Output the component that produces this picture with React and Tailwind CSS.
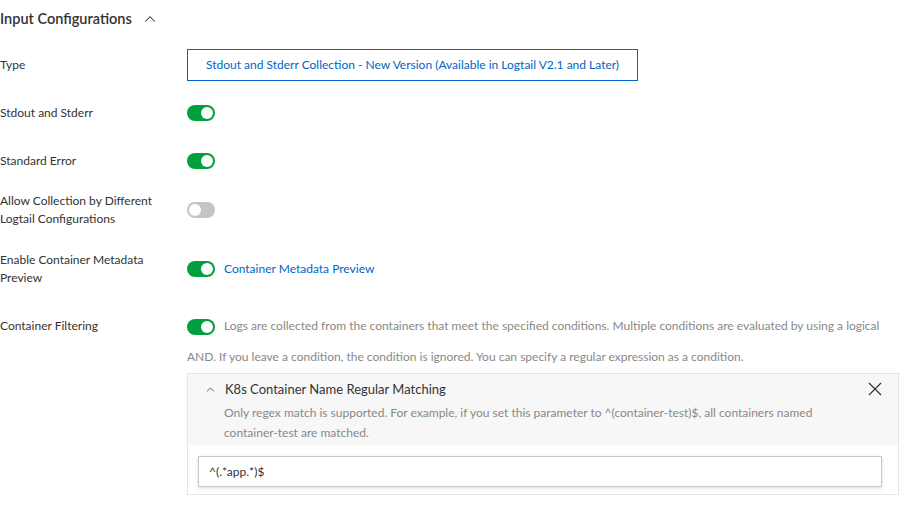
import { ChevronUp } from "lucide-react";

const font = { fontFamily: "Lato, 'Liberation Sans', sans-serif" };

function Toggle({ on = true }) {
  return (
    <span
      className={`inline-flex h-4 w-7 shrink-0 items-center rounded-full px-[2px] align-middle ${
        on ? "justify-end bg-[#00a03e]" : "justify-start bg-[#c4c4c4]"
      }`}
    >
      <span className="h-3 w-3 rounded-full bg-white" />
    </span>
  );
}

function Row({ label, children, className = "" }) {
  return (
    <div className={`flex items-center ${className}`}>
      <div className="w-[187px] shrink-0 pr-4 text-xs leading-[18px] text-[#333]">{label}</div>
      <div className="flex min-h-8 flex-1 items-center">{children}</div>
    </div>
  );
}

export default function App() {
  return (
    <div className="h-[514px] w-[907px] overflow-hidden bg-white text-[#333]" style={font}>
      {/* ── header ── */}
      <div className="flex h-[38px] items-center gap-[9px]">
        <span className="text-[14.5px] font-semibold text-[#333]">Input Configurations</span>
        <ChevronUp size={18} strokeWidth={1.4} className="text-[#333]" />
      </div>

      <div className="mt-[11px]">
        <Row label="Type">
          <div className="flex h-8 w-[451px] items-center justify-center border border-[#0064c8] text-xs text-[#0064c8]">
            Stdout and Stderr Collection - New Version (Available in Logtail V2.1 and Later)
          </div>
        </Row>
        <Row label="Stdout and Stderr" className="mt-4">
          <Toggle />
        </Row>
        <Row label="Standard Error" className="mt-4">
          <Toggle />
        </Row>
        <Row label="Allow Collection by Different Logtail Configurations" className="mt-[15px]">
          <Toggle on={false} />
        </Row>
        <Row label="Enable Container Metadata Preview" className="mt-[23px]">
          <Toggle />
          <span className="ml-[9px] text-xs text-[#0064c8]">Container Metadata Preview</span>
        </Row>

        {/* ── container filtering ── */}
        <div className="mt-[23px] flex">
          <div className="w-[187px] shrink-0 text-xs leading-8 text-[#333]">Container Filtering</div>
        </div>
        <div className="-mt-8 pl-[187px] pr-[8px]">
          <p className="text-xs leading-[31px] text-[#888]">
            <Toggle />
            <span className="ml-[9px]">
              Logs are collected from the containers that meet the specified conditions. Multiple conditions are evaluated by using a logical AND. If you leave a condition, the condition is ignored. You can specify a regular expression as a condition.
            </span>
          </p>

          <div className="mt-px border border-[#e5e5e5]">
            <div className="bg-[#f7f7f7] pb-[3px] pt-[6px]">
              <div className="flex items-center pl-4 pr-4">
                <ChevronUp size={13} strokeWidth={1.4} className="text-[#333]" />
                <span className="ml-[8px] flex-1 text-[13px] leading-[18px] text-[#333]">
                  K8s Container Name Regular Matching
                </span>
                <svg width="14" height="14" viewBox="0 0 14 14" className="text-[#333]">
                  <path d="M1 1L13 13M13 1L1 13" stroke="currentColor" strokeWidth="1.2" fill="none" />
                </svg>
              </div>
              <p className="mt-[5px] pl-[36px] pr-4 text-xs leading-5 text-[#888]">
                Only regex match is supported. For example, if you set this parameter to ^(container-test)$, all containers named{" "}
                <span className="whitespace-nowrap">container-test</span> are matched.
              </p>
            </div>
            <div className="pb-[7px] pl-[10px] pr-[16px] pt-[10px]">
              <div className="flex h-[31px] items-center border border-[#c8c8c8] px-[10px] text-xs text-[#333] shadow-[0_1px_3px_rgba(0,0,0,0.15)]">
                ^(.*app.*)$
              </div>
            </div>
          </div>
        </div>
      </div>
    </div>
  );
}
